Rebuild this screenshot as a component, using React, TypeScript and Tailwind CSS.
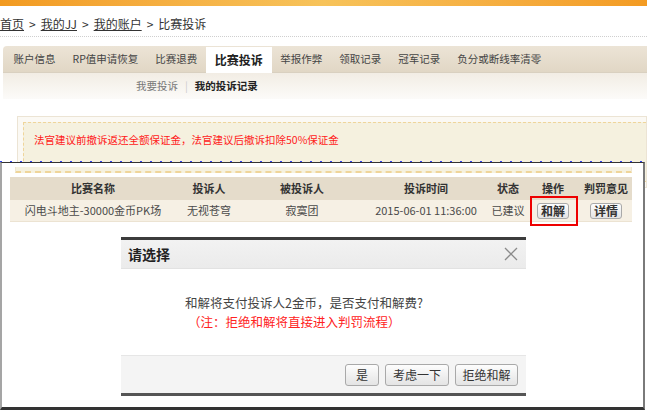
import React from "react";

const font = { fontFamily: '"Noto Sans CJK SC", "Noto Sans", sans-serif' };

const tabs = ["账户信息", "RP值申请恢复", "比赛退费", "比赛投诉", "举报作弊", "领取记录", "冠军记录", "负分或断线率清零"];

const cols = [166, 66, 120, 128, 36, 54, 52];

function Btn({ children, className = "" }: { children: React.ReactNode; className?: string }) {
  return (
    <div
      className={`flex items-center justify-center border border-[#a9a9a9] rounded-[3px] bg-gradient-to-b from-[#fdfdfd] to-[#e4e4e4] text-[12px] text-[#333] ${className}`}
    >
      {children}
    </div>
  );
}

export default function App() {
  const head = ["比赛名称", "投诉人", "被投诉人", "投诉时间", "状态", "操作", "判罚意见"];
  return (
    <div className="relative w-[647px] h-[410px] overflow-hidden bg-white" style={font}>
      {/* top orange bar */}
      <div className="h-[6px] bg-gradient-to-r from-[#f29a1f] via-[#f7c35a] to-[#f39b22]" />
      {/* breadcrumb */}
      <div className="h-[31px] flex items-end pb-[4px] border-b border-dotted border-[#cfcfcf] text-[12px] leading-[16px] text-[#333] whitespace-nowrap">
        <span className="underline">首页</span>
        <span className="mx-[5px]">&gt;</span>
        <span className="underline">我的JJ</span>
        <span className="mx-[5px]">&gt;</span>
        <span className="underline">我的账户</span>
        <span className="mx-[5px]">&gt;</span>
        <span>比赛投诉</span>
      </div>
      {/* tabs */}
      <div className="mt-[9px] ml-[3px] h-[27px] flex items-stretch pl-[2px] rounded-tl-[4px] bg-gradient-to-b from-[#ece4d6] to-[#e1d7c5] border-b border-[#d9d0c0]">
        {tabs.map((t) =>
          t === "比赛投诉" ? (
            <div key={t} className="mt-[1px] mb-[-1px] px-[9px] flex items-center bg-white text-[12px] font-bold text-[#222] whitespace-nowrap">
              {t}
            </div>
          ) : (
            <div key={t} className="px-[8.5px] flex items-center text-[10.5px] text-[#444] whitespace-nowrap">
              {t}
            </div>
          )
        )}
      </div>
      {/* sub nav */}
      <div className="ml-[3px] h-[26px] flex items-center pl-[133px] bg-gradient-to-b from-[#f2ede4] to-[#fcfbf9] text-[10.5px] whitespace-nowrap">
        <span className="text-[#777]">我要投诉</span>
        <span className="mx-[7px] text-[#ccc]">|</span>
        <span className="font-bold text-[#222]">我的投诉记录</span>
      </div>
      {/* notice */}
      <div className="mt-[17px] ml-[17px] border border-[#ece4d4] bg-[#fbf9f4] p-[5px] pr-0">
        <div className="h-[60px] border border-dashed border-[#efd59a] border-r-0 bg-[#f5f1df] pl-[10px] pt-[9px] text-[10.5px] leading-[16px] text-[#ff1a1a] whitespace-nowrap">
          法官建议前撤诉返还全额保证金，法官建议后撤诉扣除50%保证金
        </div>
      </div>

      {/* overlapping window */}
      <div className="absolute left-0 top-[161px] w-[645px] h-[249px] flex flex-col">
        <div className="h-[1px] bg-[linear-gradient(to_right,#3344ee_2px,transparent_2px)] bg-[length:10px_1px]" />
        <div className="flex-1 border-t border-[#333] border-l-2 border-l-[#a5a5a5] border-r-2 border-r-[#7a7a7a] border-b-[3px] border-b-[#333] bg-white">
          <div className="mt-[4px] ml-[13px] w-[617px] h-[6px] bg-[#f5f1df] border-b-2 border-dashed border-[#efd59a] border-x border-x-[#efe6d0]" />
          <div className="mt-[4px] ml-[8px] w-[622px]">
            <div className="h-[23px] flex items-center bg-[#e5dccb] text-[11px] font-bold text-[#333]">
              {head.map((h, i) => (
                <div key={h} style={{ width: cols[i] }} className="flex justify-center whitespace-nowrap">
                  {h}
                </div>
              ))}
            </div>
            <div className="h-[22px] flex items-center bg-[#f6f0e4] border-b border-[#ece3d2] text-[11px] text-[#4a4a4a]">
              <div style={{ width: cols[0] }} className="flex justify-center whitespace-nowrap">闪电斗地主-30000金币PK场</div>
              <div style={{ width: cols[1] }} className="flex justify-center whitespace-nowrap">无视苍穹</div>
              <div style={{ width: cols[2] }} className="flex justify-center whitespace-nowrap">寂寞团</div>
              <div style={{ width: cols[3] }} className="flex justify-center whitespace-nowrap">2015-06-01 11:36:00</div>
              <div style={{ width: cols[4] }} className="flex justify-center whitespace-nowrap">已建议</div>
              <div style={{ width: cols[5] }} className="flex justify-center">
                <Btn className="w-[32px] h-[16px] font-bold text-[11px] border-[#8a8a8a] leading-none">和解</Btn>
              </div>
              <div style={{ width: cols[6] }} className="flex justify-center">
                <Btn className="w-[32px] h-[16px] font-bold text-[11px] border-[#8a8a8a] leading-none">详情</Btn>
              </div>
            </div>
          </div>
        </div>
      </div>

      {/* red highlight box */}
      <div className="absolute left-[530px] top-[196px] w-[48px] h-[30px] border-2 border-[#ee0000]" />

      {/* dialog */}
      <div className="absolute left-[121px] top-[237px] w-[405px] flex flex-col bg-white border-t-[3px] border-[#3c3c3c] border-b-[3px] border-b-[#555]">
        <div className="h-[29px] flex items-center justify-between pl-[7px] pr-[8px] bg-gradient-to-b from-[#f2f2f2] to-[#ebebeb] border-b border-[#e2e2e2]">
          <span className="text-[14px] font-bold text-[#222]">请选择</span>
          <svg width="14" height="14" viewBox="0 0 14 14">
            <path d="M1 1 L13 13 M13 1 L1 13" stroke="#8a8a8a" strokeWidth="1.3" fill="none" />
          </svg>
        </div>
        <div className="h-[86px] pl-[64px] pt-[24px] text-[12.5px] leading-[19px] whitespace-nowrap">
          <div className="text-[#444]">和解将支付投诉人2金币，是否支付和解费?</div>
          <div className="text-[#ff2222] pl-[3px]">（注：拒绝和解将直接进入判罚流程）</div>
        </div>
        <div className="h-[38px] flex items-center justify-end gap-[6px] pr-[8px] bg-[#f4f4f4] border-t border-[#e6e6e6]">
          <Btn className="w-[34px] h-[22px]">是</Btn>
          <Btn className="w-[64px] h-[22px]">考虑一下</Btn>
          <Btn className="w-[63px] h-[22px]">拒绝和解</Btn>
        </div>
      </div>
    </div>
  );
}
